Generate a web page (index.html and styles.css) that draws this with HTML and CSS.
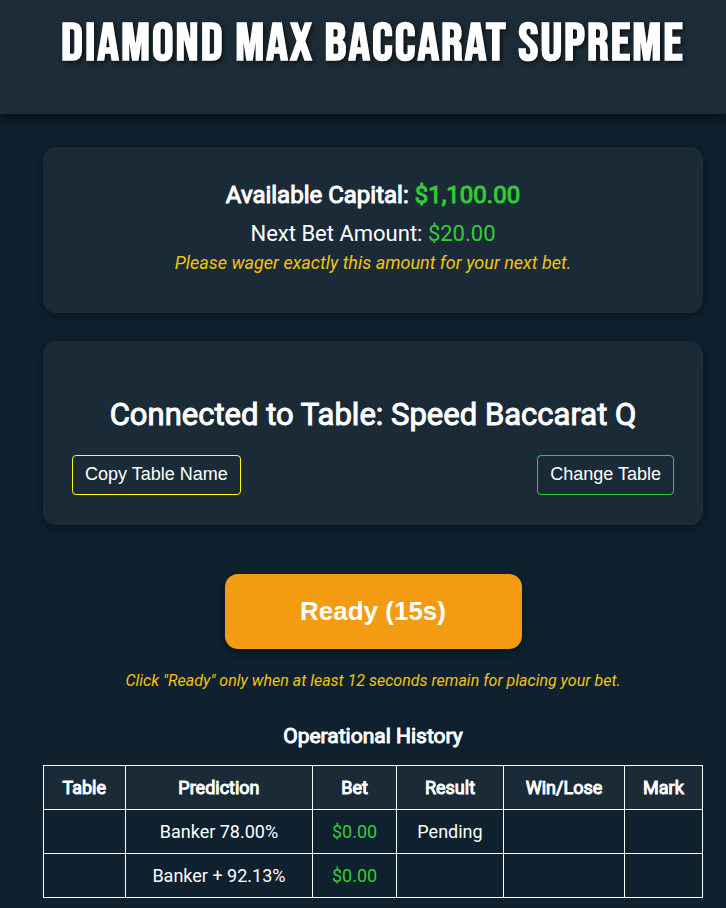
FILE: index.html
```html
<!DOCTYPE html>
<html lang="en">
<head>
    <meta charset="UTF-8">
    <meta name="viewport" content="width=device-width, initial-scale=1.0">
    <title>Diamond Max Baccarat Supreme</title>
    <link rel="stylesheet" href="styles.css">
</head>
<body>
    <header>
        <h1>DIAMOND MAX BACCARAT SUPREME</h1>
    </header>

    <main class="container">
        <section class="card capital">
            <p class="available">Available Capital: <span class="amount">$1,100.00</span></p>
            <p class="next-bet">Next Bet Amount: <span class="amount">$20.00</span></p>
            <p class="wager-note">Please wager exactly this amount for your next bet.</p>
        </section>

        <section class="card connection">
            <h2>Connected to Table: Speed Baccarat Q</h2>
            <div class="buttons">
                <button type="button" class="btn btn-copy">Copy Table Name</button>
                <button type="button" class="btn btn-change">Change Table</button>
            </div>
        </section>

        <button type="button" class="ready">Ready (15s)</button>
        <p class="ready-note">Click "Ready" only when at least 12 seconds remain for placing your bet.</p>

        <section class="history">
            <h3>Operational History</h3>
            <table>
                <thead>
                    <tr>
                        <th>Table</th>
                        <th>Prediction</th>
                        <th>Bet</th>
                        <th>Result</th>
                        <th>Win/Lose</th>
                        <th>Mark</th>
                    </tr>
                </thead>
                <tbody>
                    <tr>
                        <td></td>
                        <td>Banker 78.00%</td>
                        <td class="amount">$0.00</td>
                        <td>Pending</td>
                        <td></td>
                        <td></td>
                    </tr>
                    <tr>
                        <td></td>
                        <td>Banker + 92.13%</td>
                        <td class="amount">$0.00</td>
                        <td></td>
                        <td></td>
                        <td></td>
                    </tr>
                </tbody>
            </table>
        </section>
    </main>
</body>
</html>
```
FILE: styles.css
```css
* {
    margin: 0;
    padding: 0;
    box-sizing: border-box;
}

body {
    font-family: Roboto, sans-serif;
    background: #0f212e;
    color: #fff;
    text-align: center;
}

header {
    padding: 14px 23px 38px 43px;
    background: #1c2c37;
    box-shadow: 0 4px 10px rgba(0, 0, 0, 0.6);
}

h1 {
    font-family: "Bebas Neue", "Liberation Sans Narrow", "Liberation Sans", sans-serif;
    font-size: 54px;
    line-height: 60px;
    padding-bottom: 2px;
    letter-spacing: 2px;
    white-space: nowrap;
    text-shadow: 2px 2px 4px rgba(0, 0, 0, 0.6);
}

.container {
    padding: 33px 23px 10px 43px;
}

.card {
    margin-bottom: 28px;
    padding: 29px;
    background: #1a2b37;
    border-radius: 13px;
    box-shadow: 0 2px 10px rgba(0, 0, 0, 0.4);
}

.capital {
    padding-bottom: 34px;
}

.amount {
    color: #32cd32;
}

/* heavier text on the regular weight's widths */
.available,
h2,
h3,
th {
    font-weight: 400;
    -webkit-text-stroke: 1px;
}

.available {
    margin-bottom: 4px;
    font-size: 24px;
    line-height: 39px;
}

.next-bet {
    font-size: 22px;
    line-height: 29px;
}

.wager-note {
    padding-bottom: 1px;
    font-size: 18px;
    line-height: 30px;
    font-style: italic;
    color: #f1c40f;
}

.connection {
    padding-top: 54px;
}

h2 {
    margin-bottom: 20px;
    font-size: 31px;
    line-height: 40px;
}

.buttons {
    display: flex;
    justify-content: space-between;
    margin-bottom: 1px;
}

.btn {
    padding: 0 12px 2px;
    font-family: "Liberation Sans", sans-serif;
    font-size: 18px;
    line-height: 36px;
    color: #fff;
    background: transparent;
    border: 1px solid;
    border-radius: 4px;
    cursor: pointer;
}

.btn-copy {
    border-color: #ff0;
}

.btn-change {
    border-color: #32cd32;
}

.ready {
    width: 45%;
    margin-top: 21px;
    font-family: "Liberation Sans", sans-serif;
    font-size: 26px;
    font-weight: 700;
    line-height: 75px;
    color: #fff;
    background: #f39c12;
    border: none;
    border-radius: 13px;
    box-shadow: 0 4px 8px rgba(0, 0, 0, 0.4);
    cursor: pointer;
}

.ready-note {
    margin-top: 20px;
    font-size: 16px;
    line-height: 24px;
    font-style: italic;
    color: #f1c40f;
}

.history {
    margin-top: 30px;
}

h3 {
    margin-bottom: 15px;
    font-size: 21px;
    line-height: 27px;
}

table {
    width: 100%;
    border-collapse: collapse;
    font-size: 18px;
}

th,
td {
    height: 44px;
    padding: 0 12px;
    border: 1px solid #fff;
}

th {
    background: #1a2b37;
}
```
